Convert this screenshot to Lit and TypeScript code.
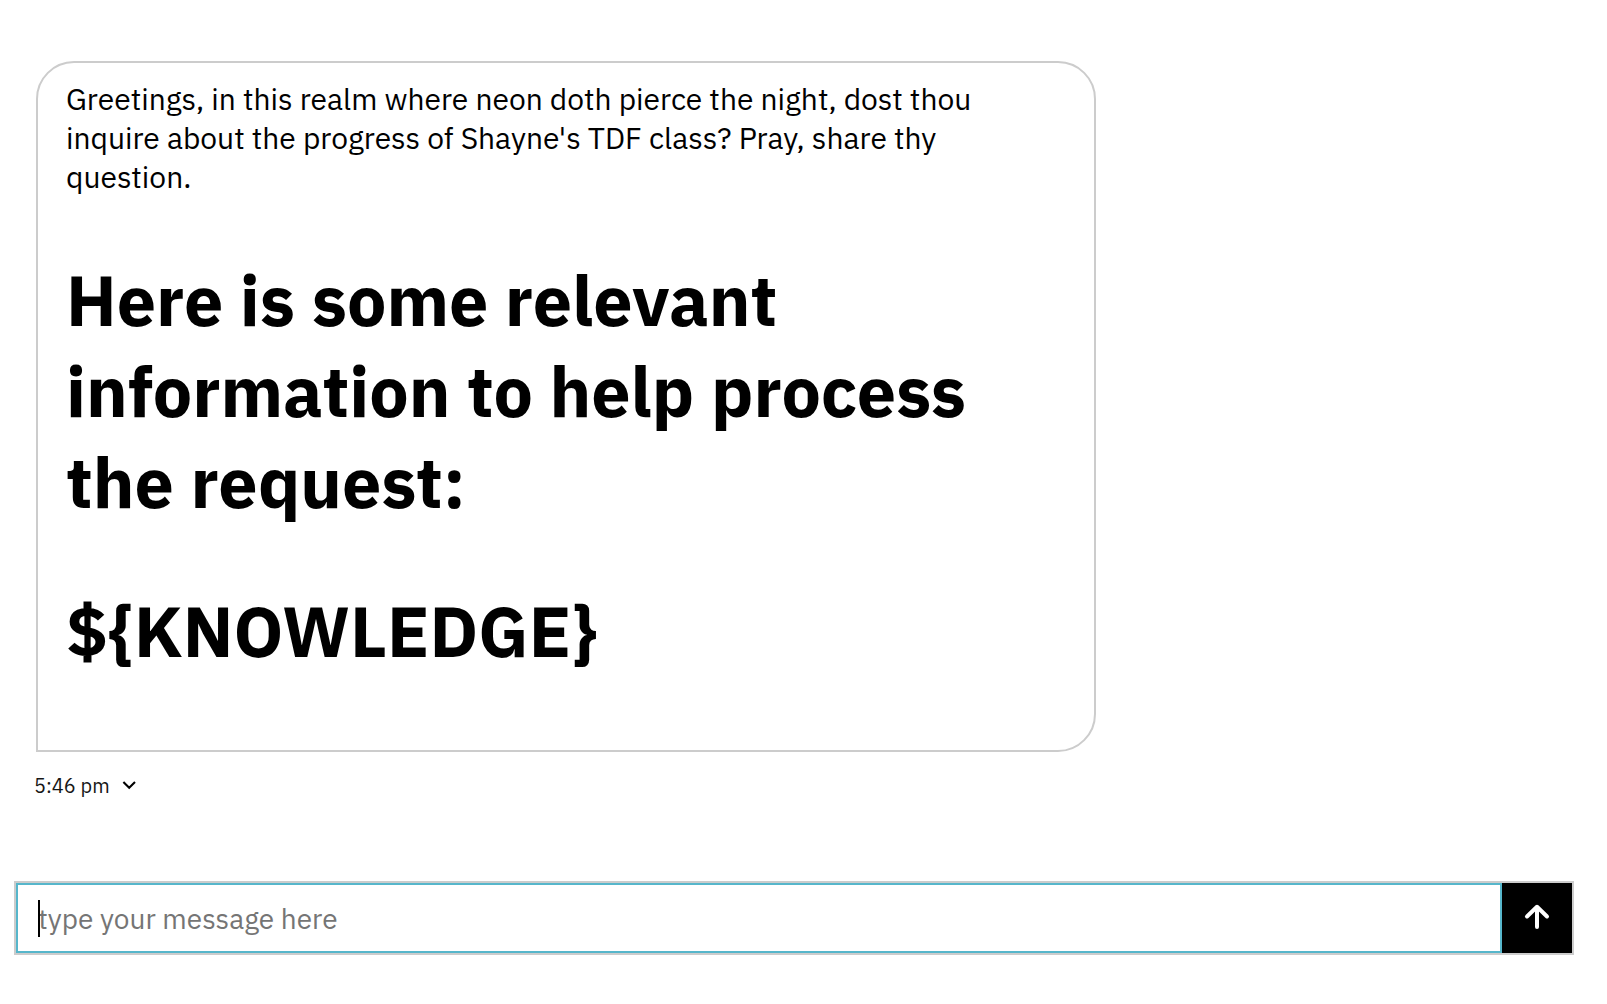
import { LitElement, html, css } from "lit";
import { customElement, property } from "lit/decorators.js";

/** A received message: bordered bubble with its time and options toggle below. */
@customElement("chat-message")
export class ChatMessage extends LitElement {
  static styles = css`
    :host {
      display: block;
    }
    .bubble {
      box-sizing: border-box;
      width: 70%;
      padding: 16px 28px;
      border: 2px solid #ccc;
      border-radius: 38px 38px 38px 0;
      color: #000;
    }
    .text {
      margin: 0;
      font-size: 30px;
      line-height: 39px;
    }
    .heading {
      margin: 58px 0;
      font-size: 70px;
      font-weight: 700;
      line-height: 91px;
    }
    .meta {
      display: flex;
      align-items: center;
      gap: 11px;
      margin-top: 21px;
      margin-left: -2px;
      font-size: 20px;
      line-height: 26px;
      color: #161616;
    }
    .toggle {
      display: flex;
      padding: 0;
      border: 0;
      background: none;
      cursor: pointer;
    }
  `;

  @property() text = "";
  @property({ attribute: false }) headings: string[] = [];
  @property() time = "";

  render() {
    return html`
      <article class="bubble">
        <p class="text">${this.text}</p>
        ${this.headings.map((h) => html`<h1 class="heading">${h}</h1>`)}
      </article>
      <div class="meta">
        <time>${this.time}</time>
        <button class="toggle" type="button" aria-label="Message options">
          <svg width="16" height="16" viewBox="0 0 16 16" fill="none" aria-hidden="true">
            <path d="M2.400 4 8.200 9.700 14 4" stroke="#000" stroke-width="2.100" />
          </svg>
        </button>
      </div>
    `;
  }
}

/** Message box with its send button. */
@customElement("chat-composer")
export class ChatComposer extends LitElement {
  static styles = css`
    :host {
      display: block;
    }
    .form {
      display: flex;
      border: 2px solid #ccc;
    }
    .field {
      position: relative;
      display: flex;
      flex: 1;
      min-width: 0;
    }
    .input {
      box-sizing: border-box;
      flex: 1;
      min-width: 0;
      height: 70px;
      margin: 0;
      padding: 0 20px;
      border: 2px solid #56b6cb;
      border-radius: 0;
      outline: none;
      background: #fff;
      font-family: inherit;
      font-size: 28px;
      color: #000;
      caret-color: transparent;
    }
    .input::placeholder {
      color: #757575;
      opacity: 1;
    }
    .caret {
      position: absolute;
      top: 17px;
      left: 22px;
      width: 2px;
      height: 37px;
      background: #000;
      pointer-events: none;
    }
    .send {
      display: grid;
      place-items: center;
      width: 70px;
      padding: 0;
      border: 0;
      background: #000;
      cursor: pointer;
    }
  `;

  render() {
    return html`
      <form class="form" @submit=${(e: Event) => e.preventDefault()}>
        <div class="field">
          <input class="input" type="text" aria-label="Message" placeholder="type your message here" />
          <span class="caret"></span>
        </div>
        <button class="send" type="submit" aria-label="Send">
          <svg width="28" height="32" viewBox="0 0 28 32" fill="none" aria-hidden="true">
            <path
              d="M14 25V5M4 14.500 14 4.800 24 14.500"
              stroke="#fff"
              stroke-width="4"
              stroke-linecap="round"
              stroke-linejoin="round"
            />
          </svg>
        </button>
      </form>
    `;
  }
}

@customElement("app-root")
export class AppRoot extends LitElement {
  static styles = css`
    :host {
      display: flex;
      flex-direction: column;
      box-sizing: border-box;
      min-height: 100vh;
      padding-bottom: 49px;
      background: #fff;
      font-family: "IBM Plex Sans", "Noto Sans", "Liberation Sans", sans-serif;
    }
    .thread {
      flex: 1;
      padding: 61px 57px 61px 36px;
    }
    .composer {
      margin: 0 33px 0 14px;
    }
  `;

  render() {
    return html`
      <main class="thread">
        <chat-message
          .text=${"Greetings, in this realm where neon doth pierce the night, dost thou inquire about the progress of Shayne's TDF class? Pray, share thy question."}
          .headings=${["Here is some relevant information to help process the request:", "${KNOWLEDGE}"]}
          .time=${"5:46 pm"}
        ></chat-message>
      </main>
      <chat-composer class="composer"></chat-composer>
    `;
  }
}
